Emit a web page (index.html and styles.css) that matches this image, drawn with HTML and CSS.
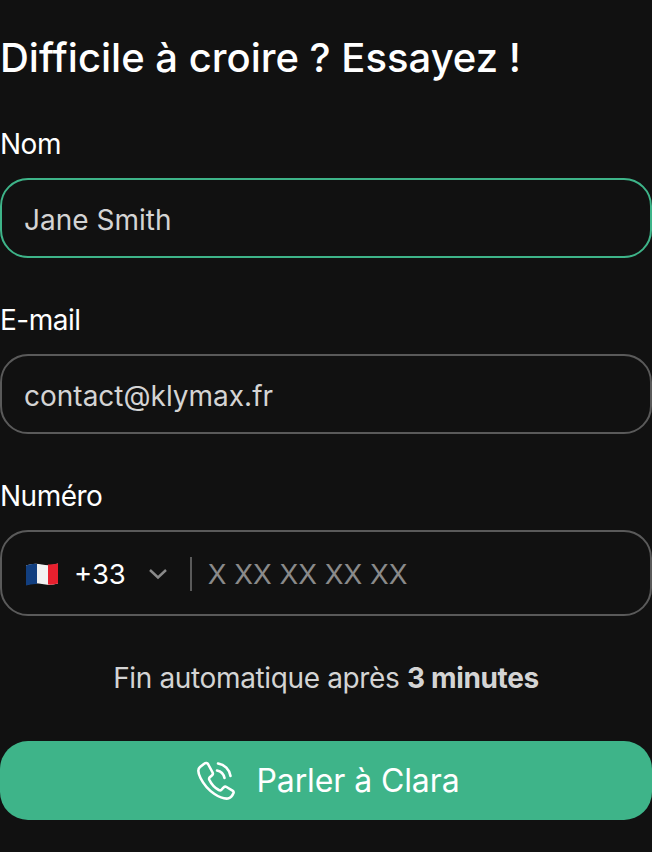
FILE: index.html
```html
<!DOCTYPE html>
<html lang="fr">
<head>
    <meta charset="UTF-8">
    <meta name="viewport" content="width=device-width, initial-scale=1.0">
    <title>Parler à Clara</title>
    <link rel="stylesheet" href="styles.css">
</head>
<body>
    <form class="call-form">
        <h1>Difficile à croire ? Essayez !</h1>

        <div class="field">
            <label for="nom">Nom</label>
            <input class="text-input text-input-active" type="text" id="nom" value="Jane Smith">
        </div>

        <div class="field">
            <label for="email">E-mail</label>
            <input class="text-input" type="text" id="email" value="contact@klymax.fr">
        </div>

        <div class="field">
            <label for="numero">Numéro</label>
            <div class="phone-input">
                <svg class="flag" width="34" height="28" viewBox="0 0 34 26">
                    <path d="M1 4.5q8-3 16-1t16-1v20q-8 2.5-16 .6t-16 1z" fill="#f2f2f2"/>
                    <path d="M1 4.5q5-2 11-1.6v20.2q-6-.3-11 1.5z" fill="#123f80"/>
                    <path d="M23 3.4q5 .1 10-.9v20q-5 1.5-10 1z" fill="#e8202e"/>
                </svg>
                <span class="dial-code">+33</span>
                <svg class="chevron" width="20" height="12" viewBox="0 0 20 12">
                    <path d="M2 2l8 7.500 8-7.500" fill="none" stroke="#8a8a8a" stroke-width="2.400"/>
                </svg>
                <span class="divider"></span>
                <input class="phone-number" type="text" id="numero" placeholder="X XX XX XX XX">
            </div>
        </div>

        <p class="notice">Fin automatique après <strong>3 minutes</strong></p>

        <button type="button" class="call-btn">
            <svg width="40" height="40" viewBox="0 0 40 40" fill="none" stroke="#fff" stroke-width="2.600" stroke-linecap="round" stroke-linejoin="round">
                <path d="M8.500 2.500 4 6c-2.500 2-2 6 .5 11 3 6 8 12 14 16 5 3.300 10 5 13.500 4.500 2.500-.5 4.500-3 5.500-5.500.4-1-.1-1.800-1-2.400l-6-3.600c-1-.6-2-.4-2.800.4l-2.200 2.300c-.8.700-1.700.8-2.700.3-4-2.200-7.500-6-9.500-10.300-.4-1-.2-1.800.5-2.500l2.300-2c.8-.7 1-1.700.5-2.700L12 3c-.7-1.200-2.400-1.400-3.500-.5z"/>
                <path d="M21 9.500c3.800.8 6.700 3.700 7.500 7.500"/>
                <path d="M22 2.500c6.500 1 11.500 6 12.500 12.500"/>
            </svg>
            <span>Parler à Clara</span>
        </button>
    </form>
</body>
</html>
```

FILE: styles.css
```css
body {
    margin: 0;
    background: #111111;
    color: #ffffff;
    font-family: Inter, "Liberation Sans", sans-serif;
}

.call-form {
    display: flex;
    flex-direction: column;
    padding-top: 34px;
}

h1 {
    margin: 0 0 46px;
    font-size: 40px;
    line-height: 48px;
    font-weight: 500;
}

.field {
    display: flex;
    flex-direction: column;
    gap: 17px;
    margin-bottom: 46px;
}

label {
    font-size: 28px;
    line-height: 33px;
    letter-spacing: -0.5px;
}

.text-input {
    box-sizing: border-box;
    width: 100%;
    height: 80px;
    padding: 4px 22px 0;
    background: transparent;
    border: 2px solid #5a5a5a;
    border-radius: 28px;
    color: #d4d4d4;
    font-family: inherit;
    font-size: 28px;
    outline: none;
}

.text-input-active {
    border-color: #3eb489;
}

.phone-input {
    box-sizing: border-box;
    display: flex;
    align-items: center;
    height: 86px;
    padding: 2px 23px 0;
    border: 2px solid #5a5a5a;
    border-radius: 28px;
}

.flag {
    flex: none;
}

.dial-code {
    margin-left: 15px;
    font-size: 27.500px;
}

.chevron {
    margin-left: 22px;
}

.divider {
    width: 2px;
    height: 34px;
    margin: 0 16px 0 22px;
    background: #5a5a5a;
}

.phone-number {
    flex: 1;
    min-width: 0;
    padding: 0;
    background: transparent;
    border: none;
    color: #d4d4d4;
    font-family: inherit;
    font-size: 27.500px;
    outline: none;
}

.phone-number::placeholder {
    color: #8a8a8a;
    opacity: 1;
}

.notice {
    margin: 0 0 47px;
    color: #d4d4d4;
    font-size: 28px;
    line-height: 32px;
    text-align: center;
    letter-spacing: -0.36px;
}

.notice strong {
    font-weight: 700;
}

.call-btn {
    display: flex;
    align-items: center;
    justify-content: center;
    gap: 20px;
    width: 100%;
    height: 79px;
    padding: 0 0 0 4px;
    background: #3eb489;
    border: none;
    border-radius: 28px;
    color: #ffffff;
    font-family: inherit;
    font-size: 32px;
    letter-spacing: -0.1px;
    cursor: pointer;
}
```
